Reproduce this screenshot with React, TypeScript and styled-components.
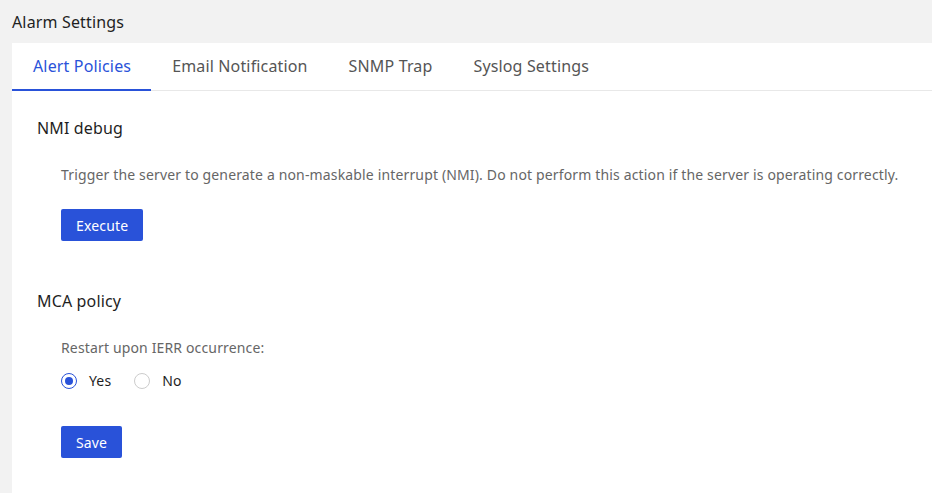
import React, { useState } from 'react';
import styled, { createGlobalStyle } from 'styled-components';

const GlobalStyle = createGlobalStyle`
  html, body {
    margin: 0;
    padding: 0;
    background: #f2f2f2;
  }
  body {
    font-family: "Noto Sans", "Open Sans", sans-serif;
    letter-spacing: 0.15px;
  }
`;

const tabs = ['Alert Policies', 'Email Notification', 'SNMP Trap', 'Syslog Settings'];

const App: React.FC = () => {
  const [activeTab, setActiveTab] = useState(0);
  const [restart, setRestart] = useState(true);

  return (
    <>
      <GlobalStyle />
      <Page>
        <PageTitle>Alarm Settings</PageTitle>
        <Card>
          <TabBar>
            {tabs.map((tab, i) => (
              <Tab key={tab} active={i === activeTab} onClick={() => setActiveTab(i)}>
                {tab}
              </Tab>
            ))}
          </TabBar>

          <Section>
            <SectionTitle>NMI debug</SectionTitle>
            <SectionBody>
              <Description>
                Trigger the server to generate a non-maskable interrupt (NMI). Do not perform this
                action if the server is operating correctly.
              </Description>
              <PrimaryButton>Execute</PrimaryButton>
            </SectionBody>
          </Section>

          <Section>
            <SectionTitle>MCA policy</SectionTitle>
            <SectionBody>
              <Description>Restart upon IERR occurrence:</Description>
              <RadioGroup>
                <RadioLabel onClick={() => setRestart(true)}>
                  <RadioCircle checked={restart} />
                  Yes
                </RadioLabel>
                <RadioLabel onClick={() => setRestart(false)}>
                  <RadioCircle checked={!restart} />
                  No
                </RadioLabel>
              </RadioGroup>
              <PrimaryButton>Save</PrimaryButton>
            </SectionBody>
          </Section>
        </Card>
      </Page>
    </>
  );
};

const Page = styled.div`
  display: flex;
  flex-direction: column;
  height: 493px;
  padding-left: 12px;
  box-sizing: border-box;
  overflow: hidden;
`;

const PageTitle = styled.div`
  height: 43px;
  display: flex;
  align-items: center;
  font-size: 16px;
  color: #1f1f1f;
`;

const Card = styled.div`
  flex: 1;
  background: #ffffff;
`;

const TabBar = styled.div`
  display: flex;
  height: 48px;
  border-bottom: 1px solid #e8e8e8;
  box-sizing: border-box;
`;

const Tab = styled.div.withConfig({
  shouldForwardProp: (prop) => !['active'].includes(prop),
})<{ active: boolean }>`
  display: flex;
  align-items: center;
  padding: 0 20px 0 21px;
  margin-bottom: -1px;
  font-size: 16px;
  cursor: pointer;
  color: ${(props) => (props.active ? '#2952d9' : '#555555')};
  border-bottom: 2px solid ${(props) => (props.active ? '#2952d9' : 'transparent')};
`;

const Section = styled.div`
  padding: 25px 0 23px 25px;
`;

const SectionTitle = styled.div`
  font-size: 16px;
  color: #1f1f1f;
  line-height: 24px;
`;

const SectionBody = styled.div`
  padding: 25px 0 0 24px;
  display: flex;
  flex-direction: column;
  align-items: flex-start;
`;

const Description = styled.div`
  font-size: 14px;
  color: #666666;
  line-height: 20px;
`;

const PrimaryButton = styled.button`
  margin-top: 24px;
  height: 32px;
  padding: 0 15px;
  border: none;
  border-radius: 2px;
  background: #2952d9;
  color: #ffffff;
  font-family: inherit;
  letter-spacing: inherit;
  font-size: 14px;
  cursor: pointer;
`;

const RadioGroup = styled.div`
  display: flex;
  gap: 23px;
  margin-top: 13px;
  margin-bottom: 11px;
`;

const RadioLabel = styled.label`
  display: flex;
  align-items: center;
  gap: 12px;
  font-size: 14px;
  color: #1f1f1f;
  cursor: pointer;
  line-height: 20px;
`;

const RadioCircle = styled.span.withConfig({
  shouldForwardProp: (prop) => !['checked'].includes(prop),
})<{ checked: boolean }>`
  width: 16px;
  height: 16px;
  box-sizing: border-box;
  border-radius: 50%;
  border: 1px solid ${(props) => (props.checked ? '#2952d9' : '#cccccc')};
  display: flex;
  align-items: center;
  justify-content: center;

  &::after {
    content: '';
    width: 8px;
    height: 8px;
    border-radius: 50%;
    background: #2952d9;
    display: ${(props) => (props.checked ? 'block' : 'none')};
  }
`;

export default App;
